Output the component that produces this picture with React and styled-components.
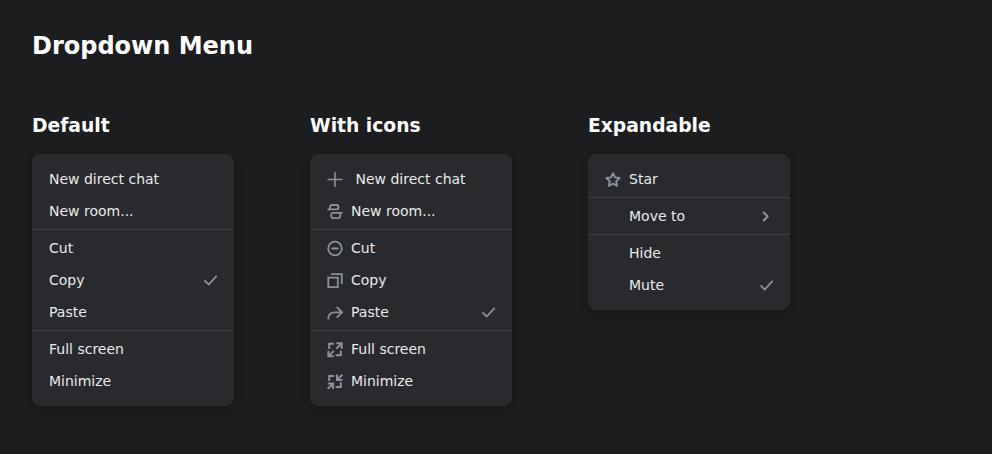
import React from 'react';
import styled, { createGlobalStyle } from 'styled-components';

const GlobalStyle = createGlobalStyle`
  * { box-sizing: border-box; }
  body {
    margin: 0;
    background: #1c1d1e;
    color: #fff;
    font-family: "DejaVu Sans", sans-serif;
  }
`;

const Page = styled.main`
  min-height: 454px;
  padding: 32px;
  background: #1c1d1e;
`;

const Title = styled.h1`
  margin: 0;
  font-size: 24px;
  line-height: 28px;
  font-weight: 700;
`;

const Columns = styled.div`
  display: flex;
  align-items: flex-start;
  gap: 76px;
  margin-top: 54px;
`;

const Section = styled.section`
  width: 202px;
`;

const Heading = styled.h2`
  margin: 0 0 16px;
  font-size: 18.72px;
  line-height: 24px;
  font-weight: 700;
  white-space: nowrap;
`;

const Menu = styled.ul`
  margin: 0;
  padding: 8px 0;
  list-style: none;
  background: #282a2e;
  border: 1px solid #2b2d31;
  border-radius: 8px;
  box-shadow: 0 2px 8px rgba(0, 0, 0, 0.24);
`;

const Item = styled.li`
  display: flex;
  align-items: center;
  height: 32px;
  padding: 0 14px 0 16px;
  color: #e8e9eb;
  font-size: 14px;
  line-height: 20px;
`;

const Divider = styled.li`
  height: 1px;
  margin: 2px 0;
  background: #3f4146;
`;

const IconSlot = styled.span`
  flex: none;
  width: 16px;
  height: 16px;
  margin-right: 8px;
  color: #8b919b;
`;

const Label = styled.span`
  flex: 1;
  white-space: nowrap;
  padding-left: ${(p) => p.$inset || 0}px;
`;

const Trailing = styled(IconSlot)`
  margin-right: 0;
`;

const Glyph = styled.svg`
  display: block;
  overflow: visible;
  fill: none;
  stroke: currentColor;
  stroke-linejoin: ${(p) => p.$join || 'miter'};
  stroke-linecap: ${(p) => p.$cap || 'butt'};
  stroke-width: ${(p) => p.$weight || 1.8};
`;

const drawings = {
  plus: { weight: 1.6, cap: 'round', d: 'M8 1.6v13.8M1.1 8.5h13.8' },
  room: { cap: 'round', join: 'round', d: 'M1.2 6.4H9.4a2.1 2.1 0 0 0 2.1-2.1v-.2A2.1 2.1 0 0 0 9.4 2H5.2a2.1 2.1 0 0 0-2.1 2.1v2.3M14.8 9.8H6.3a2.1 2.1 0 0 0-2.1 2.1V13a2.1 2.1 0 0 0 2.1 2.1h4.8a2.1 2.1 0 0 0 2.1-2.1V9.8' },
  minus: { cap: 'round', d: 'M14.8 8.5a6.8 6.8 0 1 1-13.6 0a6.8 6.8 0 1 1 13.6 0M5.2 8.5h5.6' },
  copy: { d: 'M1.3 5.6h9.5v9.5H1.3zM4 2.2h10.8V12' },
  forward: { cap: 'round', d: 'M1.3 14.7C1.3 10.4 3.7 8.3 8 8.3h6.5M10.3 3.5L15 8.3l-4.7 4.8' },
  expand: { weight: 2, d: 'M2.2 8V2.7H7M9.3 2.3h5.4v5.4M14.5 2.5L9.3 7.7M13.8 9.7v4.6H8.7M1.4 9.9v5.4h5.4M1.6 15.1L6.8 9.9' },
  shrink: { weight: 2, d: 'M2.2 8V2.9H7.2M10 1.6V7h5.4M10.2 6.8L15.4 1.6M13.8 9.2v4.9H8.7M.7 10.5h5.4v5.4M5.9 10.7L.7 15.9' },
  star: { weight: 1.9, join: 'round', d: 'M8 2.2l2 4.2 4.6.6-3.4 3.2.9 4.6L8 12.6l-4.1 2.2.9-4.6L1.4 7 6 6.4z' },
  chevron: { weight: 2.1, cap: 'round', join: 'round', d: 'M4.7 4.5l4 4-4 4' },
  check: { weight: 1.8, d: 'M1.4 8.4l4.3 4.1L13.7 3.9' },
};

const Icon = ({ name }) => {
  const { weight, cap, join, d } = drawings[name];
  return (
    <Glyph width="16" height="16" viewBox="0 0 16 16" $weight={weight} $cap={cap} $join={join}>
      <path d={d} />
    </Glyph>
  );
};

const sections = [
  {
    title: 'Default',
    groups: [
      [{ label: 'New direct chat' }, { label: 'New room...' }],
      [{ label: 'Cut' }, { label: 'Copy', end: 'check' }, { label: 'Paste' }],
      [{ label: 'Full screen' }, { label: 'Minimize' }],
    ],
  },
  {
    title: 'With icons',
    icons: true,
    groups: [
      [{ icon: 'plus', label: 'New direct chat', inset: 4.5 }, { icon: 'room', label: 'New room...' }],
      [{ icon: 'minus', label: 'Cut' }, { icon: 'copy', label: 'Copy' }, { icon: 'forward', label: 'Paste', end: 'check' }],
      [{ icon: 'expand', label: 'Full screen' }, { icon: 'shrink', label: 'Minimize' }],
    ],
  },
  {
    title: 'Expandable',
    icons: true,
    groups: [
      [{ icon: 'star', label: 'Star' }],
      [{ label: 'Move to', end: 'chevron' }],
      [{ label: 'Hide' }, { label: 'Mute', end: 'check' }],
    ],
  },
];

export default function App() {
  return (
    <Page>
      <GlobalStyle />
      <Title>Dropdown Menu</Title>
      <Columns>
        {sections.map((section) => (
          <Section key={section.title}>
            <Heading>{section.title}</Heading>
            <Menu>
              {section.groups.map((group, index) => (
                <React.Fragment key={index}>
                  {index > 0 && <Divider />}
                  {group.map((item) => (
                    <Item key={item.label}>
                      {section.icons && <IconSlot>{item.icon && <Icon name={item.icon} />}</IconSlot>}
                      <Label $inset={item.inset}>{item.label}</Label>
                      {item.end && <Trailing><Icon name={item.end} /></Trailing>}
                    </Item>
                  ))}
                </React.Fragment>
              ))}
            </Menu>
          </Section>
        ))}
      </Columns>
    </Page>
  );
}
